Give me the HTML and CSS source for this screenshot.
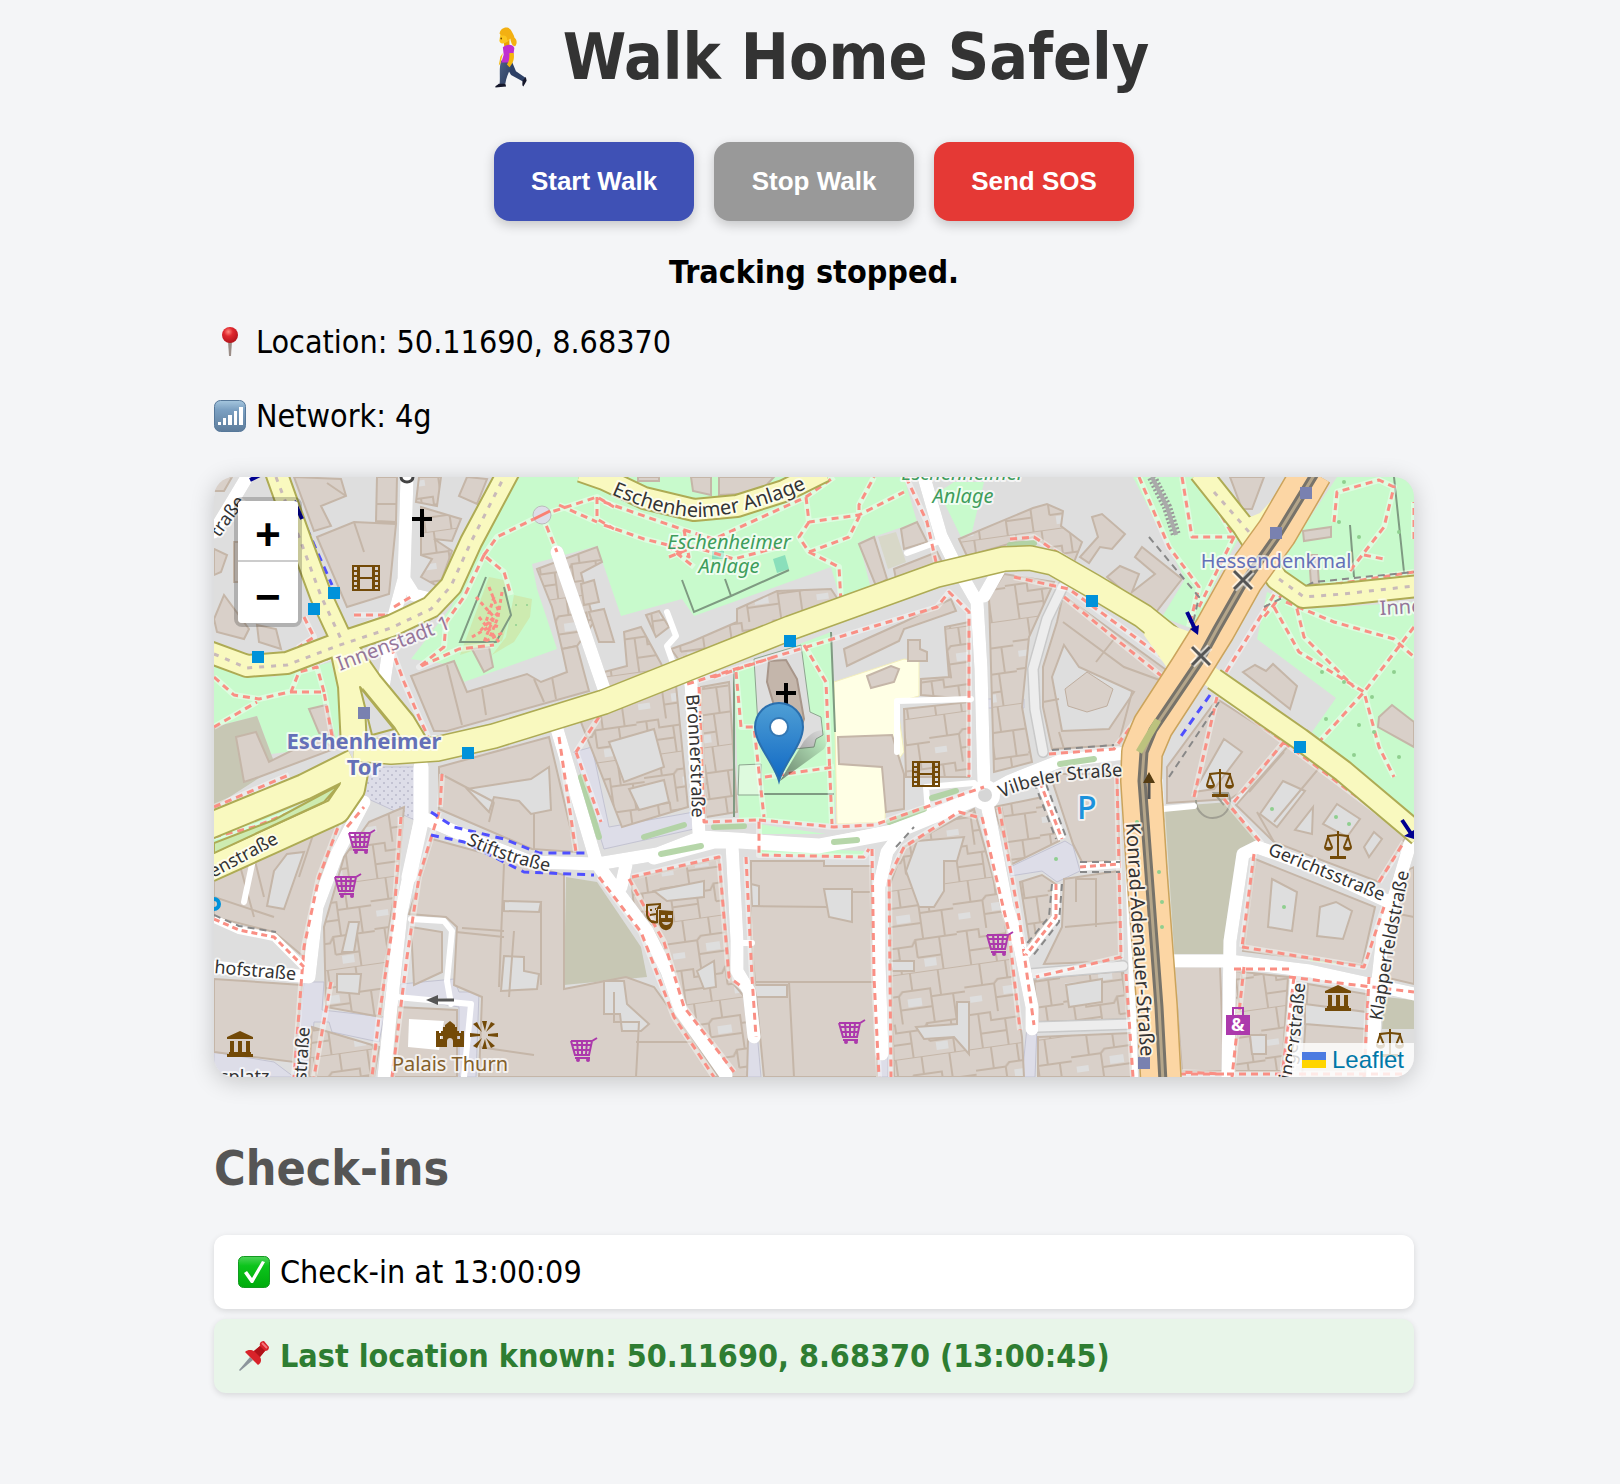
FILE: index.html
```html
<!DOCTYPE html>
<html lang="en">
<head>
<meta charset="utf-8">
<meta name="viewport" content="width=device-width, initial-scale=1">
<title>Walk Home Safely</title>
<link rel="stylesheet" href="styles.css">
</head>
<body>
<main class="page">
  <h1 class="title">
    <svg class="title-icon" viewBox="0 0 64 64" aria-hidden="true">
      <defs>
        <linearGradient id="jeans" x1="0" y1="0" x2="1" y2="1"><stop offset="0" stop-color="#4d6284"/><stop offset="1" stop-color="#27385c"/></linearGradient>
      </defs>
      <g transform="translate(5 2) scale(.82 .96)">
        <path d="M34 36L39 46L51 53L48 57L33 50L27 41Z" fill="#2d4066"/>
        <path d="M21 35H34C35 42 28 48 26 59L19 60C20 50 18 43 21 35Z" fill="url(#jeans)"/>
        <path d="M18 59H26L27 62L14 63C13 61 16 61 18 59ZM47 56L51 52L52 56L48 62C46 61 47 58 47 56Z" fill="#15172b"/>
        <path d="M24 15L31 13L31 22L25 22Z" fill="#e9a400"/>
        <path d="M23 21C27 18 35 17 37 22L36 28L34 37L21 37L24 29Z" fill="#c02fd0"/>
        <path d="M31 27L36 27C38 34 34 39 31 42L28 39C31 35 31 32 31 27ZM23 27L20 38L18 40L20 31Z" fill="#f5b70c"/>
        <path d="M20 7C19 1 31-1 33 6C34 12 30 16 24 17C20 18 18 15 19 13Z" fill="#fcc61f"/>
        <path d="M19 7C20 0 31-2 34 5C36 8 37 10 37 11C40 13 41 17 38 20C34 20 33 16 32 12L28 14C29 10 26 8 22 9Z" fill="#f3b012"/>
        <circle cx="21" cy="12" r="1" fill="#6c4203"/>
      </g>
    </svg>
    Walk Home Safely
  </h1>

  <div class="actions">
    <button class="btn btn-start" type="button">Start Walk</button>
    <button class="btn btn-stop" type="button">Stop Walk</button>
    <button class="btn btn-sos" type="button">Send SOS</button>
  </div>

  <p class="status">Tracking stopped.</p>

  <p class="info">
    <svg class="emoji" viewBox="0 0 32 32" aria-hidden="true">
      <defs><radialGradient id="ball" cx=".4" cy=".3" r=".7"><stop offset="0" stop-color="#ff8a80"/><stop offset=".4" stop-color="#e0282e"/><stop offset="1" stop-color="#b3141c"/></radialGradient></defs>
      <path d="M14 15H18L17 30H15Z" fill="#9b8d87"/>
      <circle cx="16" cy="9" r="8" fill="url(#ball)"/>
    </svg>
    Location: 50.11690, 8.68370
  </p>
  <p class="info">
    <svg class="emoji" viewBox="0 0 32 32" aria-hidden="true">
      <defs><linearGradient id="sig" x2="0" y2="1"><stop offset="0" stop-color="#a5c6de"/><stop offset=".3" stop-color="#7ba0c2"/><stop offset="1" stop-color="#5d7c9b"/></linearGradient></defs>
      <rect x="0.500" y="0.500" width="31" height="31" rx="6" fill="url(#sig)" stroke="#56789a"/>
      <path d="M4 22h3v3h-3zM9 18h3v7h-3zM14 15h4v10h-4zM20 11h3v14h-3zM25 7h4v18h-4z" fill="#fff"/>
    </svg>
    Network: 4g
  </p>

  <section class="map" aria-label="Map">
    <svg class="map-tiles" viewBox="0 0 1200 600" preserveAspectRatio="xMidYMid slice" aria-hidden="true">
      <defs>
        <pattern id="houses" width="96" height="84" patternUnits="userSpaceOnUse" patternTransform="rotate(-8)">
          <rect width="96" height="84" fill="#d9d0c9"/>
          <path d="M0 22H30L34 18H62V26H96M0 50H22V58H50L54 52H96M18 0V22M30 22V50M44 0V18M62 26V52M72 0V26M84 26V52M10 50V84M36 58V84M54 52V70M54 70H78M78 52V84M0 0H96M30 36H62M10 70H36" fill="none" stroke="#c5b6a8" stroke-width="2"/>
          <path d="M38 26h14v8h-14zM60 72h12v8h-12zM4 32h12v6h-12z" fill="#dedede"/>
        </pattern>
        <pattern id="paving" width="8" height="8" patternUnits="userSpaceOnUse"><rect width="8" height="8" fill="#dddde8"/><path d="M1 1h2v2h-2zM5 5h2v2h-2z" fill="#c2c2d2"/></pattern>
        <linearGradient id="pin" x2="0" y2="1"><stop offset="0" stop-color="#4f9fd5"/><stop offset="1" stop-color="#1068c4"/></linearGradient>
        <linearGradient id="pinShade" x1="0" y1="1" x2="1" y2="0"><stop offset="0" stop-color="#000" stop-opacity=".6"/><stop offset="1" stop-color="#000" stop-opacity="0"/></linearGradient>
        <symbol id="cinema" viewBox="0 0 28 26"><path fill-rule="evenodd" d="M0 0H28V26H0ZM8 2V12H20V2ZM8 14V24H20V14ZM2 2v3h3v-3zM2 7v3h3v-3zM2 12v3h3v-3zM2 17v3h3v-3zM2 22v2h3v-2zM23 2v3h3v-3zM23 7v3h3v-3zM23 12v3h3v-3zM23 17v3h3v-3zM23 22v2h3v-2z"/></symbol>
        <symbol id="cart" viewBox="0 0 28 26"><path d="M1 4H22L27 1M22 4L19 18H5L1 4M3 8H21M3 13H20M7 4L8 17M12 4V17M17 4L16 17M5 21H20" fill="none" stroke="#ac39ac" stroke-width="2"/><circle cx="8" cy="23" r="2"/><circle cx="18" cy="23" r="2"/></symbol>
        <symbol id="museum" viewBox="0 0 26 26"><path d="M13 0L26 6V8H0V6ZM3 10H7V21H3ZM11 10H15V21H11ZM19 10H23V21H19ZM2 21H24V23H26V26H0V23H2Z"/></symbol>
        <symbol id="court" viewBox="0 0 28 28"><path d="M13 0H15V3L25 4V6L28 16C28 21 19 21 19 16L23 6L15 5V25H22V28H6V25H13V5L5 6L9 16C9 21 0 21 0 16L3 6V4L13 3ZM4 9L2 16H7ZM24 9L21 16H26Z" fill-rule="evenodd"/></symbol>
        <symbol id="theatre" viewBox="0 0 28 28"><path fill-rule="evenodd" d="M0 1L15 0V6H12V20C6 22 1 18 0 12ZM2 3V12L5 17L10 18V6L13 2ZM4 6h2v2h-2zM9 5h2v2h-2zM4 11l6-1v2l-6 1zM13 7L27 8V18C27 25 22 28 19 27C14 26 12 20 13 16ZM15 12v3h4v-3zM22 12v3h4v-3zM16 19C17 23 23 23 25 19Z"/></symbol>
        <symbol id="castle" viewBox="0 0 28 26"><path d="M0 10H3V12H5V10H7V6H9V4L14 0L19 4V6H21V10H23V12H25V10H28V26H17V20C17 16 11 16 11 20V26H0ZM4 15V18H7V15ZM21 15V18H24V15Z" fill-rule="evenodd"/></symbol>
        <symbol id="star" viewBox="0 0 28 28"><path d="M12 0H17L15 10ZM12 28H17L15 18ZM0 12L10 13V15L0 16ZM28 12L18 13V15L28 16ZM3 3L7 1L12 11ZM25 3L21 1L16 11ZM3 25L7 27L12 17ZM25 25L21 27L16 17Z"/></symbol>
        <g id="footways">
          <path d="M270 78L283 60L328 38L343 75M270 78L250 120L232 145M328 38L383 20L400 30M383 20V42L400 52M345 28L383 45M272 80L290 95L297 118M0 200L20 218L45 222L75 215H110L120 270M110 215L103 190L85 195L77 215M0 250L43 225M90 140L100 160L85 170L107 165M180 130L200 118M140 138H175L145 150M177 170L190 205L205 240L215 262M130 175L105 185M232 145L230 170L205 190L245 172L280 168"/>
          <path d="M390 25L470 53L475 80L455 70L480 90M470 53L500 62L592 20L620 0M592 20L595 45L645 38L690 15M595 45L585 60L595 75L625 90L627 125M595 75L635 60L645 40V28L660 0M455 80L480 70L520 82L565 70M692 0L713 45L722 85M390 215L470 182M500 200L560 180L723 130L735 115L755 135V300M560 180L470 208M390 48L430 62L470 72"/>
          <path d="M485 210L490 345L545 343V378L650 380L655 372M545 343L620 350L660 348L770 310M522 195L527 250H540L550 340M590 168L612 205L618 347M551 300L620 290M345 260L362 375M362 275L387 345M385 240L362 275"/>
          <path d="M228 297L226 330M225 335L205 400L193 480L183 560L178 600M187 340L180 440L165 540L158 600M128 340L105 400L90 470L80 600M117 505L100 600M385 400L427 455L460 540L500 600M418 400L505 380L515 500L528 510M415 402L450 465L470 530L520 595M532 380L538 500L542 560M658 372L660 500L665 600M763 340L745 335L690 370L675 400L677 600M768 340L795 455L806 553M785 330L805 440L820 548"/>
          <path d="M0 330L75 298M0 360L40 350L120 318M133 350L150 330M903 300L907 480L822 500M912 497L919 600M835 277L900 272L955 200M796 62L820 60L955 150M800 100L855 112L955 185L955 200M850 120L955 205"/>
          <path d="M946 302L955 440L965 595L1010 597M1010 322L1048 367M1200 62L1200 25M1030 490L1018 600M1080 500L1068 600M1028 470L1150 490L1170 430M1040 377L1028 470M1075 500L1200 515M1020 492H1075M1155 500L1150 600M965 597H1200M1165 405L1190 365M1020 325L1070 265M1003 215L1190 355M1012 195L1065 110M980 320L1003 220"/>
          <path d="M925 0L955 70L985 110L975 150M968 0L978 60H1020L985 0M1020 60L985 130M1120 45L1123 15L1165 3L1180 10L1170 50L1135 95M1200 95L1070 115L1050 140M1072 125L1120 145L1180 162L1200 180M1200 150L1150 215L1105 265M1080 120L1090 160L1140 210M1060 130L1085 175L1150 215L1165 270L1180 300M1150 78L1170 82"/>
        </g>
        <path id="alleys" d="M0 442L25 453L60 460L90 490M826 305L848 362M842 407V440L812 478M866 390L906 387"/>
        <path id="l-anlage" d="M397 17Q450 41 490 40Q545 36 612 2"/>
        <path id="l-bronner" d="M472 218Q477 270 478 350"/>
        <path id="l-stift" d="M252 367Q298 389 348 397"/>
        <path id="l-vilbeler" d="M788 321Q828 301 915 299"/>
        <path id="l-konrad" d="M912 346L918 450L928 600"/>
        <path id="l-gericht" d="M1053 377L1180 429"/>
        <path id="l-klapper" d="M1168 544L1180 470L1200 370"/>
        <path id="l-linger" d="M1076 608L1086 560L1095 470"/>
      </defs>

      <rect width="1200" height="600" fill="#dedede"/>

      <g fill="#c8facc">
        <path d="M298 0H690L703 45L645 65L657 112L627 125L617 90L480 139L468 122L407 139L383 69L318 87L323 112L343 172L250 205L238 188L197 182L237 130L270 60Z"/>
        <path d="M725 15L740 5H770L758 55L747 60Z"/>
        <path d="M520 192L617 155L623 290L620 347L525 342Z"/>
        <path d="M1123 0H1200V102L1097 111L1063 90Z"/>
        <path d="M1053 115L1093 132L1200 125V345L1098 255L1122 221L1043 162Z"/>
        <path d="M919 0H979L1026 59L1003 102L979 152L948 140L971 102Z"/>
        <path d="M0 188L60 200L117 185L127 225L123 269L57 277L43 239L0 250Z"/>
        <path d="M545 347L612 357H545ZM545 370L650 374V380L545 378ZM0 360L120 315L100 335L0 385Z"/>
      </g>
      <g fill="#cdebb0">
        <path d="M275 100L290 103L297 135L288 164L246 178Z"/><path d="M300 118L318 122L316 140L300 165L278 178L292 160Z"/>
        <path d="M1053 469L1079 470V479L1052 476ZM1096 474L1122 480L1124 487L1096 484Z"/>
        <path d="M748 534H767L782 547V574H770L766 552L749 543Z"/>
      </g>
      <path d="M498 74h12v8h-12zM559 82l12-4 4 14-12 4z" fill="#8adfbb"/>
      <g fill="#c7c7b4">
        <path d="M0 250L43 239L62 290L0 330Z"/><path d="M352 400L383 405L427 470L433 500L350 508Z"/>
        <path d="M948 330L1016 325L1046 367L1029 380L1013 477H958Z"/><path d="M1170 520L1200 523V552H1168Z"/>
      </g>
      <path d="M664 60L682 55L692 85L674 92Z" fill="#d8d8c8"/>
      <path d="M620 205L690 182L705 184V219L683 225L690 275L672 300L671 345L623 347Z" fill="#ffffe5" stroke="#f3eebb"/>
      <g fill="#dddde8" stroke="#c3c3d2">
        <path d="M143 290H205V345L150 320Z" fill="url(#paving)"/>
        <path d="M90 505H110L108 533L170 540L165 565L118 555L115 545H100L95 600H80ZM0 575L60 585L80 600H0ZM187 507L240 502L245 515H265L262 600H245V530L187 520Z"/>
        <path d="M360 275L378 270L395 350L480 335V352L390 372ZM796 390L851 364L859 369L866 394L843 405L828 394L796 399ZM765 222H810V231H765ZM531 555H543L547 600H533ZM662 575H674V600H662ZM813 550H823L821 600H808Z"/>
      </g>

      <g fill="url(#houses)" stroke="#c5b6a8" stroke-width="2">
        <path d="M323 92L383 70L388 85L367 96L380 145L363 169L348 172L338 130Z"/>
        <path d="M390 195L413 189L410 155L427 150L450 192L393 212ZM457 172L477 165L523 145V132L563 114L617 112L627 127L470 190ZM432 138L445 134L455 150L442 160Z"/>
        <path d="M745 62L819 31L833 27L849 34L847 49L868 65L860 85L819 60L753 79Z"/>
        <path d="M365 240L462 208L474 330L408 350Z"/><path d="M487 210L515 205L523 335L492 340Z"/>
        <path d="M731 150L755 145V222L707 218V202L735 200ZM690 232L755 225V300L692 300Z"/>
        <path d="M775 120L790 97L840 105L815 160L808 230L818 285L780 295Z"/>
        <path d="M155 345L190 330L185 390L175 450L167 540L112 530L110 450L130 380Z"/>
        <path d="M98 550L165 570L160 600H95Z"/>
        <path d="M417 402L505 382L517 504L535 525L533 600H515L467 524L440 460L420 430Z"/>
        <path d="M690 370L760 332L790 440L808 560L810 600H680L675 410Z"/>
        <path d="M780 330L829 320L845 364L798 387ZM806 405L828 398L843 408L838 450L817 474ZM820 502L909 494L914 542L824 545ZM824 560L917 556L919 600H824Z"/>
        <path d="M1021 494L1074 500L1068 594H1021Z"/>
        <path d="M205 0H227L223 29L202 25ZM207 30L247 42L238 64L220 62L238 74L225 110L207 100L218 82L207 78Z"/>
      </g>

      <g fill="#d9d0c9" stroke="#c5b6a8" stroke-width="2">
        <path d="M80 0L127 2L132 19L107 29L117 49L100 54ZM103 60L140 45L182 47L175 117L133 130ZM163 0H183L182 45L162 44ZM253 0L273 2L263 27L245 19Z"/>
        <path d="M0 72L13 78L7 95L0 98ZM20 65H30V105H20ZM0 142L10 118L35 152L30 162L3 155ZM43 148L62 152L67 172L45 165ZM0 0H18L10 14H0Z"/>
        <path d="M22 260L42 255L55 285L105 260L120 272L45 300L30 305ZM95 232L112 228L120 260L105 256Z"/>
        <path d="M197 199L240 184L253 215L313 197L327 205L353 195L348 172L363 169L375 214L233 254L220 254Z"/>
        <path d="M258 172L275 170L279 190L270 195ZM367 107L380 103L385 125L370 128ZM375 135L390 132L400 165L385 165Z"/>
        <path d="M0 400L60 365L125 345L100 420L90 480L60 455L0 440Z"/>
        <path d="M424 0H445V4H424ZM477 0H497V18L479 14ZM505 0H560L545 16L505 18Z"/>
        <path d="M645 67L660 60L673 102L662 109ZM680 92L723 75L730 89L683 107ZM687 52L703 45L713 65L690 72Z"/>
        <path d="M878 40L888 37L911 57L898 72L886 70L875 86L866 80L884 60ZM928 70L968 102L939 139L893 100L906 89L925 97L918 115L941 97L921 80Z"/>
        <path d="M1016 0H1050L1038 32H1028ZM1089 54L1117 50V60L1090 64ZM1095 78H1103L1105 107H1097Z"/>
        <path d="M630 172L690 145L737 122L742 134L690 152L685 164L633 189ZM653 199L677 189L685 192L680 205L657 211ZM694 163H706V172L713 175V184H694ZM624 260L678 258L690 297V332L672 335L668 290L625 287Z"/>
        <path d="M849 118L951 192L955 205L905 268L838 272L829 230V190L843 145Z"/>
        <path d="M1029 195L1041 188L1052 194L1059 187L1083 209L1076 232ZM1165 240L1178 228L1200 245V270L1164 250Z"/>
        <path d="M1003 222L1070 265L1035 310L1016 322L953 326V290Z"/>
        <path d="M1075 268L1110 285L1192 360L1165 405L1060 365L1022 328Z"/>
        <path d="M1041 382L1161 430L1148 488L1029 474ZM1180 400L1200 390V507L1170 500Z"/>
        <path d="M960 490L1006 489L1010 594H968ZM1094 507L1152 517L1151 600H1088Z"/>
        <path d="M225 290L335 260L362 375L318 372L225 332Z"/>
        <path d="M218 362L350 398V512L412 500L440 510L505 600H265L268 520L240 508L243 450L232 440L195 437Z"/>
        <path d="M197 450L228 455V495L200 508ZM0 502L88 508L80 585L0 575ZM183 530L243 533V600H180Z"/>
        <path d="M537 384H610V389H657V447L662 504L663 600H550L542 517L537 457Z"/>
        <path d="M836 297H903L906 384L868 385L859 367ZM850 402L905 394L907 484L830 487L848 450Z"/>
      </g>
      <g fill="#dedede" stroke="#c5b6a8" stroke-width="2">
        <path d="M253 312L317 302L335 290L337 333L317 337L305 324L280 320L275 335Z"/>
        <path d="M60 394L73 377L90 375L70 432L53 429ZM123 497H147L145 517L123 515ZM135 445H145L140 475H128Z"/>
        <path d="M290 424L327 425L325 435L290 434ZM290 479L310 480V494L325 497L323 512L287 514ZM390 504H410L413 527L435 547L427 554H408L406 537H390Z"/>
        <path d="M395 265L440 252L450 290L410 305ZM415 312L450 303L455 325L425 333Z"/>
        <path d="M440 414L490 404V420L453 424ZM483 494L500 484L502 510L490 512Z"/>
        <path d="M610 412H638V445L615 440ZM537 407L545 409V429H538ZM540 508H573V520H542Z"/>
        <path d="M692 394L703 364L750 360L743 384H730V414L720 430H705ZM702 550L743 547V525H755V577L740 560L710 562ZM676 484H700V494H678Z"/>
        <path d="M850 168L865 190L920 215L895 252L848 254L838 200Z"/>
        <path d="M1069 304L1091 314L1063 350L1046 337ZM1099 330L1098 357L1081 353ZM1123 327L1146 342L1133 360L1109 347ZM1160 355L1168 362L1155 380L1150 370ZM1010 262L1028 275L1000 312L980 315Z"/>
        <path d="M1058 402L1083 415L1078 454L1054 450ZM1106 430L1122 425L1138 434L1129 462L1103 459ZM1091 527L1152 535V552L1091 547ZM1036 558H1052V577H1038ZM852 508L888 502V525L855 530Z"/>
      </g>
      <g fill="none" stroke="#c5b6a8" stroke-width="2">
        <path d="M537 429L613 430M540 505L662 505M575 505L580 600M638 415H657M113 6L132 19M162 27H182M140 45L150 75M227 297L280 325M280 325L275 345M320 337V372M248 451L290 454M290 387L285 510M327 425V508M400 515V545H425L422 600M265 570L320 578M849 145L910 190L951 205M882 185L900 162M829 225L845 222M845 255L850 272M918 215L905 265M1070 275L1035 315M1110 285L1060 345M851 450L905 445M862 425V402H882V450M242 455L290 460M300 454L295 520M1200 440L1175 435M0 420L60 440M422 565H500M1043 335L1060 365M233 188L248 248M268 212L272 238M320 202L330 225M338 200L342 222M40 380L50 420M100 355L85 400M25 385L40 440"/>
      </g>
      <path d="M851 212L873 195L899 212L893 229L873 235L854 229Z" fill="#d9d0c9" stroke="#bfae9f"/>
      <path d="M195 542L230 544L225 573L194 570Z" fill="#fff"/>
      <path d="M540 182L587 168L596 235L607 240L609 258L602 262L600 270L580 272L563 270L545 265Z" fill="#dedede" stroke="#8da58f"/>
      <path d="M555 184L572 183L583 202L590 242L585 255L565 245L553 205Z" fill="#c4b6ab" stroke="#a8968a" stroke-width="2"/>
      <path d="M525 288L547 287V318H524Z" fill="#defade" stroke="#8da58f"/>
      <g fill="none" stroke="#7f9a82" stroke-width="2"><path d="M468 103L480 135L517 119L575 93M517 119L511 102M272 100L246 165L282 165L297 138L290 110M617 155L621 255M520 192V340M550 317H620M1180 0L1190 95M1136 48L1140 100"/><path d="M982 323A17 17 0 1 0 1014 316H1000L1010 328" stroke="#a09f93"/></g>

      <g fill="none" stroke-linecap="round" stroke-linejoin="round" stroke="#c9c9c9">
        <path d="M849 109L833 142L819 192L821 232L829 275M816 497L909 489M823 550L919 547" stroke-width="12"/>
        <path d="M849 109L833 142L819 192L821 232L829 275M816 497L909 489M823 550L919 547" stroke="#ededed" stroke-width="9"/>
        <path id="streets" d="M207 340L263 364L317 385L383 387L443 377L487 360L523 362L603 369L677 354L767 320L796 304L846 284L912 276M207 285V340L187 437L177 530L170 600M150 325L123 377L103 430L95 500L0 490M343 75L390 212M343 252L383 387L433 454L453 494L467 534L512 598M477 205L485 357M518 367L523 464V494L535 514L540 560M690 352L673 375L665 410V484L668 577M773 327L793 430L806 470L818 530V552M710 0L727 59L740 85L763 125L767 192L770 310M787 89L770 119M953 484H1016L1096 494L1200 517M1014 600L1016 464L1029 377L1043 370L1100 390L1175 425M1196 367L1169 457L1161 530L1159 600M193 0L190 102L180 139L170 205M190 102L200 118L217 122M33 0L0 55M407 410L412 388" stroke-width="13"/>
        <use href="#streets" class="street-fill"/>
        <path d="M207 340L263 364L317 385L383 387L443 377L487 360L523 362L603 369L677 354L767 320L796 304L846 284L912 276M207 285V340L187 437L177 530L170 600M150 325L123 377L103 430L95 500L0 490M343 75L390 212M343 252L383 387L433 454L453 494L467 534L512 598M477 205L485 357M518 367L523 464V494L535 514L540 560M690 352L673 375L665 410V484L668 577M773 327L793 430L806 470L818 530V552M710 0L727 59L740 85L763 125L767 192L770 310M787 89L770 119M953 484H1016L1096 494L1200 517M1014 600L1016 464L1029 377L1043 370L1100 390L1175 425M1196 367L1169 457L1161 530L1159 600M193 0L190 102L180 139L170 205M190 102L200 118L217 122M33 0L0 55M407 410L412 388" stroke="#fff" stroke-width="10"/>
        <path d="M453 135L462 159L453 169L460 189M757 222L683 224V275M197 442L230 444L238 454L233 504L237 527M183 520L257 527L250 600M914 380L921 600M40 378L30 425M693 76L723 65M714 335L712 310L760 306M1079 497L1074 600M949 332L980 329M523 466H538" stroke="#fff" stroke-width="6"/>
        <path d="M207 290V345L195 400M440 380L500 364H525L605 369L680 355L765 320" stroke="#fff" stroke-width="15"/>
      </g>
      <circle cx="771" cy="318" r="15" fill="#fff"/><circle cx="771" cy="318" r="7" fill="#d6d6d6"/>
      <g fill="none" stroke="#aed1a0" stroke-width="6" stroke-linecap="round" opacity=".9"><path d="M430 360L470 348M447 377L487 369M500 350L530 349M620 365L643 363M675 345L710 332M718 321L742 314M846 287L880 282M367 300L385 360M796 68L820 66"/></g>

      <g fill="none" stroke-linejoin="round">
        <use href="#footways" stroke="#fff" stroke-opacity=".4" stroke-width="6"/>
        <use href="#footways" stroke="#fa8f84" stroke-width="3" stroke-dasharray="7 5"/>
        <use href="#alleys" stroke="#fff" stroke-width="8"/>
        <use href="#alleys" stroke="#fa8f84" stroke-width="3" stroke-dasharray="6 4"/>
        <path d="M262 120L280 140L270 165L290 155M275 110L285 135L265 155M280 120L272 145L285 150M288 115L284 140L276 160M265 140L285 165M258 160L275 150" stroke="#fa8f84" stroke-width="3" stroke-dasharray="4 3"/>
        <g stroke="#4f4fff" stroke-width="3" stroke-dasharray="8 6"><path d="M217 335L240 350L290 362L325 376H375M217 358L250 365L310 395L380 398M70 0L118 108M996 218L965 262M105 320L122 315"/></g>
        <g stroke="#888" stroke-width="2" stroke-dasharray="7 5"><path d="M0 438L25 449L62 455M820 305L842 362M832 307L852 360M838 407L835 440L810 470M848 407L845 445L818 480M866 385H906M866 395H906M838 273L900 268M935 60L985 120L978 150M1050 130L1100 105L1200 95M955 300L1005 225M682 370L700 350"/></g>
      </g>

      <g fill="none" stroke-linejoin="round">
        <g stroke="#aeab54">
          <path d="M140 272L177 275L223 272L280 259L390 225L576 151L723 98L790 82L816 81L839 86L879 109L929 139L970 172" stroke-width="26"/>
          <path d="M1000 202L1086 262L1129 294L1205 358M986 -5L1029 49L1063 102L1089 120L1129 117L1205 109M367 -6L390 2L430 21L480 33L523 29L570 14L610 -6" stroke-width="24"/>
          <path d="M-5 175L33 189L73 186L123 167L177 149L217 130L237 109L257 65L296 -8M62 -5L87 65L107 119L127 162L157 205L190 245L205 270" stroke-width="24"/>
          <path d="M127 162L137 209L140 270M-5 349L90 310L140 285M-5 392L57 364L123 334L138 312L143 285" stroke-width="28"/>
        </g>
        <g stroke="#f9f9bf">
          <path d="M140 272L177 275L223 272L280 259L390 225L576 151L723 98L790 82L816 81L839 86L879 109L929 139L970 172" stroke-width="23"/>
          <path d="M980 188L1000 202L1086 262L1129 294L1205 358M986 -5L1029 49L1063 102L1089 120L1129 117L1205 109M367 -6L390 2L430 21L480 33L523 29L570 14L610 -6" stroke-width="20"/>
          <path d="M-5 175L33 189L73 186L123 167L177 149L217 130L237 109L257 65L296 -8M62 -5L87 65L107 119L127 162L157 205L190 245L205 270" stroke-width="20"/>
          <path d="M127 162L137 209L140 270M-5 349L90 310L140 285M-5 392L57 364L123 334L138 312L143 285" stroke-width="24"/>
          <path d="M1030 50L1050 42L1070 20" stroke-width="14"/>
        </g>
        <path d="M935 140L976 155L966 192L956 195L930 158Z" fill="#f9f9bf"/>
        <path d="M146 210L180 252L158 258Z" fill="#dedede" stroke="#aeab54" stroke-width="2"/>
        <path d="M0 366L60 343L125 308L110 325L0 376Z" fill="#cdebb0" stroke="#aeab54" stroke-width="2"/>
        <path d="M0 177L33 191L73 188L123 169L177 151L217 132L237 109L257 65L290 0M62 0L87 65L107 119L127 162M1000 15L1035 55M1065 102L1090 120L1129 117L1200 109" stroke="#c9bab9" stroke-width="3" stroke-dasharray="5 7"/>
        <path d="M1098 -5L1063 55L1029 102L1001 152L976 192L939 249L928 275L927 304L933 397L943 530L947 605" stroke="#cba45c" stroke-width="42"/>
        <path d="M1098 -5L1063 55L1029 102L1001 152L976 192L939 249L928 275L927 304L933 397L943 530L947 605" stroke="#fcd6a4" stroke-width="39"/>
        <path d="M1102 -5L1063 59L1027 110L1003 152L985 185L939 253L930 275L928 304L935 397L945 530L949 605" stroke="#77736a" stroke-width="9"/>
        <path d="M1102 -5L1063 59L1027 110L1003 152L985 185L939 253L930 275L928 304L935 397L945 530L949 605" stroke="#b5a68a" stroke-width="3"/>
        <path d="M938 0L953 30L962 58" stroke="#999" stroke-width="10" stroke-dasharray="2 2"/><path d="M938 0L953 30L962 58" stroke="#aaa" stroke-width="4"/>
        <path d="M925 275L944 243" stroke="#bcc27e" stroke-width="7"/>
      </g>

      <g fill="#8fcf8f"><circle cx="1130" cy="5" r="2"/><circle cx="1145" cy="60" r="2"/><circle cx="1185" cy="55" r="2"/><circle cx="1125" cy="45" r="2"/><circle cx="1108" cy="195" r="2"/><circle cx="1130" cy="205" r="2"/><circle cx="1180" cy="195" r="2"/><circle cx="1158" cy="220" r="2"/><circle cx="1112" cy="242" r="2"/><circle cx="1145" cy="248" r="2"/><circle cx="1160" cy="255" r="2"/><circle cx="1140" cy="278" r="2"/><circle cx="1185" cy="280" r="2"/><circle cx="945" cy="395" r="2"/><circle cx="948" cy="425" r="2"/><circle cx="948" cy="450" r="2"/><circle cx="923" cy="345" r="2"/><circle cx="302" cy="128" r="1"/><circle cx="313" cy="128" r="1"/><circle cx="302" cy="148" r="1"/><circle cx="1058" cy="332" r="2"/><circle cx="1122" cy="340" r="2"/><circle cx="1135" cy="347" r="2"/><circle cx="1070" cy="430" r="2"/><circle cx="842" cy="382" r="2"/></g>
      <circle cx="328" cy="38" r="9" fill="#dddde8" stroke="#bbb"/><path d="M320 42L336 34" stroke="#fa8072" stroke-width="3"/>

      <g fill="#0092da"><path d="M114 110h12v12h-12zM94 126h12v12h-12zM38 174h12v12h-12zM248 270h12v12h-12zM570 158h12v12h-12zM872 118h12v12h-12zM1080 264h12v12h-12z"/></g>
      <path d="M144 230h12v12h-12zM1086 10h12v12h-12zM1056 50h12v12h-12zM924 580h12v12h-12z" fill="#7981b0"/>
      <g fill="none"><path d="M1020 94l18 18m0-18l-18 18M978 170l18 18m0-18l-18 18" stroke="#fff" stroke-opacity=".6" stroke-width="7"/><path d="M1020 94l18 18m0-18l-18 18M978 170l18 18m0-18l-18 18" stroke="#555" stroke-width="3"/>
        <path d="M208 32v28M198 42h20M572 206v28M562 216h20" stroke="#000" stroke-width="4"/>
        <path d="M187 0a6 5 0 0 0 12 0" stroke="#444" stroke-width="3"/>
        <path d="M973 135L981 152M1188 343L1198 358M36 3L46-2M80 24L88 42" stroke="#000090" stroke-width="4"/>
        <path d="M935 322V298M240 523H220" stroke="#555" stroke-width="3"/><circle cx="0" cy="427" r="5" stroke="#0092da" stroke-width="4"/></g>
      <path d="M976 152l9-4 -1 10zM1190 359l10-6v9z" fill="#000090"/><path d="M929 306l6-11 6 11z" fill="#553c12"/><path d="M212 523l12-5v10z" fill="#555"/>

      <g fill="#734a08">
        <use href="#cinema" x="138" y="88" width="28" height="26"/><use href="#cinema" x="698" y="284" width="28" height="26"/>
        <use href="#museum" x="13" y="554" width="26" height="26"/><use href="#museum" x="1111" y="508" width="26" height="26"/>
        <use href="#court" x="992" y="292" width="28" height="28"/><use href="#court" x="1110" y="354" width="28" height="28"/><use href="#court" x="1162" y="552" width="28" height="28"/>
        <use href="#theatre" x="432" y="426" width="28" height="28"/><use href="#castle" x="222" y="544" width="28" height="26"/><use href="#star" x="256" y="544" width="28" height="28"/>
      </g>
      <g fill="#ac39ac">
        <use href="#cart" x="134" y="352" width="28" height="26"/><use href="#cart" x="120" y="396" width="28" height="26"/><use href="#cart" x="356" y="560" width="28" height="26"/><use href="#cart" x="624" y="542" width="28" height="26"/><use href="#cart" x="772" y="454" width="28" height="26"/>
        <path d="M1012 538H1018V530H1030V538H1036V558H1012ZM1020 532V538H1028V532Z" fill-rule="evenodd"/>
      </g>
      <text class="lbl lbl-bag" x="1017" y="554">&amp;</text>

      <text class="lbl lbl-parking" x="863" y="342">P</text>
      <g class="lbl lbl-street">
        <text class="lbl-wide"><textPath href="#l-anlage">Eschenheimer Anlage</textPath></text>
        <text><textPath href="#l-bronner">Brönnerstraße</textPath></text>
        <text><textPath href="#l-stift">Stiftstraße</textPath></text>
        <text><textPath href="#l-vilbeler">Vilbeler Straße</textPath></text>
        <text class="lbl-wide"><textPath href="#l-konrad">Konrad-Adenauer-Straße</textPath></text>
        <text><textPath href="#l-gericht">Gerichtsstraße</textPath></text>
        <text><textPath href="#l-klapper">Klapperfeldstraße</textPath></text>
        <text><textPath href="#l-linger">lingerstraße</textPath></text>
        <text transform="translate(-1 401) rotate(-28)">enstraße</text>
        <text transform="translate(0 496) rotate(5)">hofstraße</text>
        <text transform="translate(92 604) rotate(-86)">straße</text>
        <text transform="translate(5 61) rotate(-54)">traße</text>
        <text x="6" y="606">splatz</text>
      </g>
      <g class="lbl lbl-park" text-anchor="middle"><text x="515" y="72">Eschenheimer</text><text x="515" y="96">Anlage</text><text x="749" y="3">Eschenheimer</text><text x="749" y="26">Anlage</text></g>
      <g class="lbl lbl-district"><text transform="translate(126 194) rotate(-21)">Innenstadt 1</text><text transform="translate(1166 138) rotate(-3)">Inne</text></g>
      <g class="lbl lbl-station" text-anchor="middle"><text class="lbl-major" x="150" y="272">Eschenheimer</text><text class="lbl-major" x="150" y="298">Tor</text><text x="1062" y="91">Hessendenkmal</text></g>
      <text class="lbl lbl-sight" x="236" y="594" text-anchor="middle">Palais Thurn</text>

      <path d="M566 304L590 264C605 246 622 252 610 272Z" fill="url(#pinShade)" opacity=".8"/>
      <path d="M565 304C560 286 541 267 541 250A24 24 0 0 1 589 250C589 267 570 286 565 304Z" fill="url(#pin)" stroke="#2a6fae" stroke-width="2"/>
      <circle cx="565" cy="250" r="9" fill="#fff" stroke="#3478b4" stroke-width="2"/>
    </svg>
    <div class="zoom">
      <button class="zoom-btn" type="button" aria-label="Zoom in">+</button>
      <button class="zoom-btn" type="button" aria-label="Zoom out">−</button>
    </div>
    <div class="credit">
      <a class="credit-link" href="#leaflet"><svg class="flag" viewBox="0 0 24 16" aria-hidden="true"><path d="M0 0H24V8H0Z" fill="#4c7be1"/><path d="M0 8H24V16H0Z" fill="#ffd500"/></svg>Leaflet</a>
    </div>
  </section>

  <h2 class="subtitle">Check-ins</h2>
  <ul class="log">
    <li class="entry">
      <svg class="emoji" viewBox="0 0 32 32" aria-hidden="true">
        <defs><linearGradient id="ok" x2="0" y2="1"><stop offset="0" stop-color="#4fd35a"/><stop offset=".3" stop-color="#0cc41c"/><stop offset="1" stop-color="#00ab0c"/></linearGradient></defs>
        <rect x="0.500" y="0.500" width="31" height="31" rx="5" fill="url(#ok)" stroke="#139a20"/>
        <path d="M6 17L9 15L14 22L24 5L27 6L15 27H13Z" fill="#fff"/>
      </svg>
      Check-in at 13:00:09
    </li>
    <li class="entry entry-last">
      <svg class="emoji" viewBox="0 0 32 32" aria-hidden="true">
        <path d="M12 17L15 20L2 31L1 30Z" fill="#8c959b"/>
        <path d="M7 12C10 9 14 10 16 11L22 6C21 3 23 1 26 1L31 7C31 10 29 11 27 11L22 17C24 20 23 23 20 25Z" fill="#d8232a"/>
        <path d="M16 11L22 17L27 11L22 6Z" fill="#b01219"/><path d="M24 3L29 8" stroke="#f5767a" stroke-width="2"/>
      </svg>
      Last location known: 50.11690, 8.68370 (13:00:45)
    </li>
  </ul>
</main>
</body>
</html>
```
FILE: styles.css
```css
* { box-sizing: border-box; }

body {
  margin: 0;
  padding: 18px 0 80px 8px;
  background: #f4f5f7;
  color: #000;
  font-family: "DejaVu Sans Condensed", "DejaVu Sans", sans-serif;
  font-size: 32px;
  line-height: 38px;
}

.page {
  width: 100%;
  max-width: 1200px;
  margin: 0 auto;
}

.title {
  display: flex;
  justify-content: center;
  align-items: center;
  gap: 20px;
  margin: 0 0 46px;
  color: #333;
  font-size: 64px;
  line-height: 78px;
}

.title-icon { width: 64px; height: 64px; }

.actions {
  display: flex;
  flex-wrap: wrap;
  justify-content: center;
  gap: 20px;
}

.btn {
  min-width: 200px;
  padding: 24px 36px;
  border: 0;
  border-radius: 16px;
  color: #fff;
  font: bold 26px/31px "Liberation Sans", Arial, sans-serif;
  box-shadow: 0 4px 12px rgba(0, 0, 0, .2);
}

.btn-start { background: #3f51b5; }
.btn-stop { background: #999; }
.btn-sos { background: #e53935; }

.status {
  margin: 32px 0;
  font-weight: bold;
  text-align: center;
}

.info {
  display: flex;
  align-items: center;
  gap: 10px;
  margin: 0 0 36px;
}

.emoji { flex: none; width: 32px; height: 32px; }

.map {
  position: relative;
  height: 600px;
  margin-top: 42px;
  overflow: hidden;
  border-radius: 20px;
  box-shadow: 0 4px 24px rgba(0, 0, 0, .2);
}

.map-tiles { display: block; width: 100%; height: 100%; }

.street-fill { stroke: #fff; }

.lbl {
  font-family: "Noto Sans", sans-serif;
  font-size: 20px;
  paint-order: stroke;
  stroke: rgba(255, 255, 255, .7);
  stroke-width: 4px;
  stroke-linejoin: round;
}

.lbl-street { fill: #333; font-size: 18px; }
.lbl-wide { font-size: 20px; }
.lbl-park { fill: #3f9d5c; font-size: 20px; font-style: italic; }
.lbl-district { fill: #95759a; }
.lbl-station { fill: #6470b8; }
.lbl-major { font-size: 22px; font-weight: bold; }
.lbl-sight { fill: #83602a; }
.lbl-parking { fill: #1c92dc; font-size: 32px; font-weight: 500; }
.lbl-bag { fill: #fff; font-size: 18px; font-weight: bold; stroke: none; }

.zoom {
  position: absolute;
  top: 20px;
  left: 20px;
  display: flex;
  flex-direction: column;
  border: 4px solid rgba(0, 0, 0, .2);
  border-radius: 8px;
  background-clip: padding-box;
}

.zoom-btn {
  width: 60px;
  height: 61px;
  padding: 14px 0 0;
  border: 0;
  border-radius: 0 0 4px 4px;
  background: #fff;
  color: #000;
  font: bold 44px/46px "Liberation Mono", monospace;
}

.zoom-btn:first-child {
  border-bottom: 2px solid #ccc;
  border-radius: 4px 4px 0 0;
}

.credit {
  position: absolute;
  right: 0;
  bottom: 0;
  padding: 0 10px;
  background: rgba(255, 255, 255, .8);
  font: 24px/34px "Liberation Sans", Arial, sans-serif;
}

.credit-link {
  display: flex;
  align-items: center;
  gap: 6px;
  color: #0078a8;
  text-decoration: none;
}

.flag { width: 24px; height: 16px; }

.subtitle {
  margin: 62px 0 38px;
  color: #555;
  font-size: 48px;
  line-height: 58px;
}

.log {
  display: flex;
  flex-direction: column;
  gap: 10px;
  margin: 0;
  padding: 0;
  list-style: none;
}

.entry {
  display: flex;
  align-items: center;
  gap: 10px;
  padding: 18px 24px;
  border-radius: 12px;
  background: #fff;
  box-shadow: 0 2px 6px rgba(0, 0, 0, .12);
}

.entry-last {
  background: #e8f5e9;
  color: #2e7d32;
  font-weight: bold;
}
```
